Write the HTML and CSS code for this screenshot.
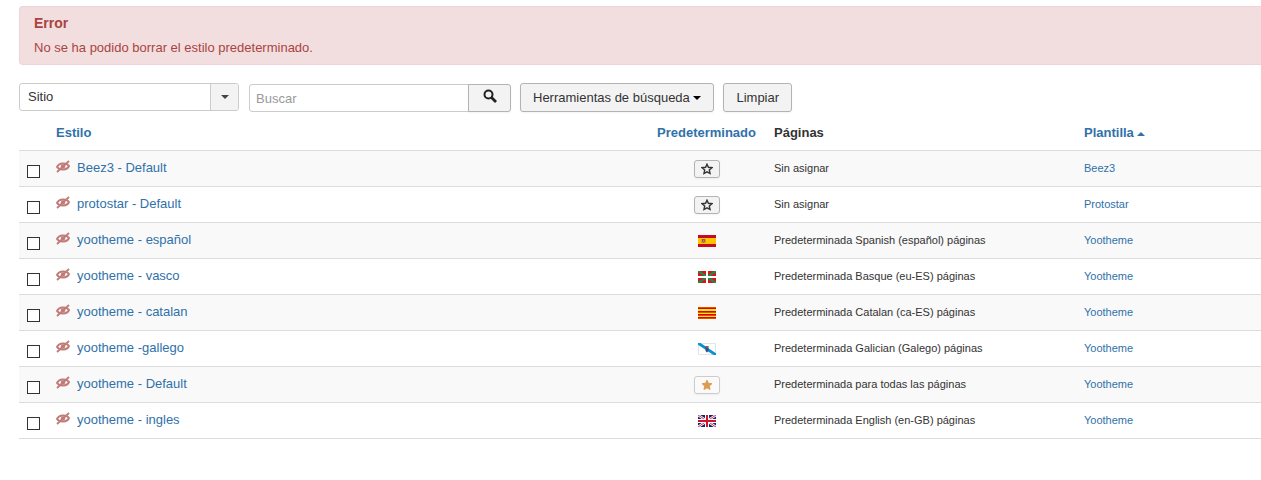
FILE: index.html
```html
<!DOCTYPE html>
<html lang="es">

<head>
    <meta charset="UTF-8">
    <title>Plantillas: Estilos</title>
    <link rel="stylesheet" href="styles.css">
</head>

<body>
    <svg class="sprite" aria-hidden="true">
        <symbol id="eye" viewBox="0 0 14 13">
            <path d="M1 7C3 2.500 10.500 2.500 13 6C11 10.500 3.500 10.500 1 7Z" fill="none" stroke="currentColor" stroke-width="2" />
            <circle cx="7" cy="6.500" r="2.200" fill="currentColor" />
            <path d="M1 12L13 1" stroke="currentColor" stroke-width="1.800" />
        </symbol>
        <symbol id="star" viewBox="0 0 12 12">
            <path d="M6 1.200L7.400 4.300L10.900 4.700L8.300 7L9 10.500L6 8.800L3 10.500L3.700 7L1.100 4.700L4.600 4.300Z" />
        </symbol>
    </svg>

    <div class="container">
        <div class="alert">
            <h4>Error</h4>
            <p>No se ha podido borrar el estilo predeterminado.</p>
        </div>

        <form class="filters" onsubmit="return false">
            <div class="select">
                <select aria-label="Cliente">
                    <option>Sitio</option>
                    <option>Administrador</option>
                </select>
                <span class="arrow"><i class="caret"></i></span>
            </div>
            <div class="search">
                <input type="text" placeholder="Buscar" aria-label="Buscar">
                <button class="btn btn-search" aria-label="Buscar">
                    <svg width="14" height="14" viewBox="0 0 14 14">
                        <circle cx="5.500" cy="5.500" r="4" fill="none" stroke="#222" stroke-width="2" />
                        <path d="M8.500 8.500L13 13" stroke="#222" stroke-width="2.800" />
                    </svg>
                </button>
            </div>
            <button type="button" class="btn">Herramientas de búsqueda <i class="caret dark"></i></button>
            <button type="button" class="btn">Limpiar</button>
        </form>

        <table class="styles">
            <thead>
                <tr>
                    <th class="check"></th>
                    <th><a href="#">Estilo</a></th>
                    <th class="default"><a href="#">Predeterminado</a></th>
                    <th class="pages">Páginas</th>
                    <th class="template"><a href="#">Plantilla <i class="caret up"></i></a></th>
                </tr>
            </thead>
            <tbody>
                <tr>
                    <td><input type="checkbox" aria-label="Beez3 - Default"></td>
                    <td><svg class="eye"><use href="#eye" /></svg><a href="#">Beez3 - Default</a></td>
                    <td class="default"><button class="btn btn-micro" aria-label="Predeterminar"><svg class="star"><use href="#star" /></svg></button></td>
                    <td class="small">Sin asignar</td>
                    <td class="small"><a href="#">Beez3</a></td>
                </tr>
                <tr>
                    <td><input type="checkbox" aria-label="protostar - Default"></td>
                    <td><svg class="eye"><use href="#eye" /></svg><a href="#">protostar - Default</a></td>
                    <td class="default"><button class="btn btn-micro" aria-label="Predeterminar"><svg class="star"><use href="#star" /></svg></button></td>
                    <td class="small">Sin asignar</td>
                    <td class="small"><a href="#">Protostar</a></td>
                </tr>
                <tr>
                    <td><input type="checkbox" aria-label="yootheme - español"></td>
                    <td><svg class="eye"><use href="#eye" /></svg><a href="#">yootheme - español</a></td>
                    <td class="default">
                        <svg class="flag" viewBox="0 0 18 12">
                            <path d="M0 0H18V12H0Z" fill="#c60b1e" />
                            <path d="M0 3H18V9H0Z" fill="#ffc400" />
                            <path d="M3 4H4V8H3ZM7 4H8V8H7Z" fill="#d99a4a" />
                            <path d="M4 4H7V7L5.500 8L4 7Z" fill="#b8503c" />
                            <path d="M5 5H6V7H5Z" fill="#a58b8b" />
                        </svg>
                    </td>
                    <td class="small">Predeterminada Spanish (español) páginas</td>
                    <td class="small"><a href="#">Yootheme</a></td>
                </tr>
                <tr>
                    <td><input type="checkbox" aria-label="yootheme - vasco"></td>
                    <td><svg class="eye"><use href="#eye" /></svg><a href="#">yootheme - vasco</a></td>
                    <td class="default">
                        <svg class="flag" viewBox="0 0 18 12">
                            <path d="M0 0H18V12H0Z" fill="#e01020" />
                            <path d="M0 0L18 12M18 0L0 12" stroke="#129247" stroke-width="2.200" />
                            <path d="M9 0V12M0 6H18" stroke="#fff" stroke-width="2" />
                        </svg>
                    </td>
                    <td class="small">Predeterminada Basque (eu-ES) páginas</td>
                    <td class="small"><a href="#">Yootheme</a></td>
                </tr>
                <tr>
                    <td><input type="checkbox" aria-label="yootheme - catalan"></td>
                    <td><svg class="eye"><use href="#eye" /></svg><a href="#">yootheme - catalan</a></td>
                    <td class="default">
                        <svg class="flag" viewBox="0 0 18 12">
                            <path d="M0 0H18V12H0Z" fill="#fcf000" />
                            <path d="M0 1.500H18M0 4.500H18M0 7.500H18M0 10.500H18" stroke="#d80012" />
                            <path d="M0 .500H18M0 5.500H18M0 8.500H18M0 11.500H18" stroke="#e84a00" />
                        </svg>
                    </td>
                    <td class="small">Predeterminada Catalan (ca-ES) páginas</td>
                    <td class="small"><a href="#">Yootheme</a></td>
                </tr>
                <tr>
                    <td><input type="checkbox" aria-label="yootheme -gallego"></td>
                    <td><svg class="eye"><use href="#eye" /></svg><a href="#">yootheme -gallego</a></td>
                    <td class="default">
                        <svg class="flag" viewBox="0 0 18 12">
                            <path d="M.500 .500H17.500V11.500H.500Z" fill="#fff" stroke="#e4e4e4" />
                            <path d="M0 0L18 12" stroke="#0a91d0" stroke-width="2.800" />
                            <path d="M7.500 3H10.500V8L9 9.500L7.500 8Z" fill="#34508c" />
                            <path d="M8 3H10V5H8Z" fill="#a8503c" />
                        </svg>
                    </td>
                    <td class="small">Predeterminada Galician (Galego) páginas</td>
                    <td class="small"><a href="#">Yootheme</a></td>
                </tr>
                <tr>
                    <td><input type="checkbox" aria-label="yootheme - Default"></td>
                    <td><svg class="eye"><use href="#eye" /></svg><a href="#">yootheme - Default</a></td>
                    <td class="default"><button class="btn btn-micro active" aria-label="Predeterminado"><svg class="star"><use href="#star" /></svg></button></td>
                    <td class="small">Predeterminada para todas las páginas</td>
                    <td class="small"><a href="#">Yootheme</a></td>
                </tr>
                <tr>
                    <td><input type="checkbox" aria-label="yootheme - ingles"></td>
                    <td><svg class="eye"><use href="#eye" /></svg><a href="#">yootheme - ingles</a></td>
                    <td class="default">
                        <svg class="flag" viewBox="0 0 18 12">
                            <path d="M0 0H18V12H0Z" fill="#10247a" />
                            <path d="M0 0L18 12M18 0L0 12" stroke="#fff" stroke-width="2.400" />
                            <path d="M0 0L18 12M18 0L0 12" stroke="#d8344a" stroke-width="1" />
                            <path d="M9 0V12M0 6H18" stroke="#fff" stroke-width="4" />
                            <path d="M9 0V12M0 6H18" stroke="#d0142c" stroke-width="2" />
                        </svg>
                    </td>
                    <td class="small">Predeterminada English (en-GB) páginas</td>
                    <td class="small"><a href="#">Yootheme</a></td>
                </tr>
            </tbody>
        </table>
    </div>
</body>

</html>
```
FILE: styles.css
```css
* {
    box-sizing: border-box;
    margin: 0;
    padding: 0;
}

body {
    background-color: #fff;
    color: #333;
    font-family: "Liberation Sans", Arial, sans-serif;
    font-size: 13px;
    line-height: 18px;
}

a {
    color: #3071a9;
    text-decoration: none;
}

.sprite {
    display: none;
}

.container {
    padding: 6px 0 0 19px;
}

/* error message */
.alert {
    padding: 7px 14px;
    border: 1px solid #eed3d7;
    border-right: 0;
    border-radius: 4px 0 0 4px;
    background-color: #f2dede;
    color: #a94442;
}

.alert h4 {
    margin-bottom: 7px;
    font-size: 14px;
}

/* filter bar */
.filters {
    display: flex;
    align-items: flex-end;
    gap: 9px;
    margin-top: 18px;
}

.select {
    position: relative;
    align-self: flex-start;
    width: 220px;
}

.select select {
    appearance: none;
    display: block;
    width: 100%;
    height: 28px;
    padding: 0 36px 0 8px;
    border: 1px solid #ccc;
    border-radius: 3px;
    background-color: #fff;
    color: #333;
    font: inherit;
}

.select .arrow {
    position: absolute;
    top: 1px;
    right: 1px;
    bottom: 1px;
    display: flex;
    align-items: center;
    justify-content: center;
    width: 28px;
    border-left: 1px solid #ccc;
    border-radius: 0 2px 2px 0;
    background-color: #f3f3f3;
    pointer-events: none;
}

.search {
    display: flex;
    align-items: flex-end;
    margin-left: 1px;
}

.search input {
    width: 220px;
    height: 28px;
    padding: 0 6px;
    border: 1px solid #ccc;
    border-radius: 3px 0 0 3px;
    color: #333;
    font: inherit;
}

.search input::placeholder {
    color: #999;
}

.btn {
    height: 29px;
    padding: 0 12px;
    border: 1px solid #b3b3b3;
    border-radius: 3px;
    background-color: #f3f3f3;
    box-shadow: 0 1px 2px rgba(0, 0, 0, .05);
    color: #333;
    font: inherit;
    white-space: nowrap;
}

.btn-search {
    width: 43px;
    height: 28px;
    margin-left: -1px;
    border-radius: 0 3px 3px 0;
}

.caret {
    display: inline-block;
    border-top: 4px solid #444;
    border-right: 4px solid transparent;
    border-left: 4px solid transparent;
    vertical-align: middle;
}

.caret.dark {
    border-top-color: #000;
}

.caret.up {
    border-top: 0;
    border-bottom: 4px solid #3071a9;
}

/* list of styles */
.styles {
    width: 100%;
    margin-top: 2px;
    border-collapse: collapse;
    table-layout: fixed;
}

.styles th,
.styles td {
    height: 36px;
    padding: 0 8px;
    border-bottom: 1px solid #ddd;
    text-align: left;
    vertical-align: middle;
}

.styles th {
    padding-top: 3px;
}

.styles tbody tr:nth-child(odd) {
    background-color: #f9f9f9;
}

.styles .check {
    width: 29px;
}

.styles .default {
    width: 119px;
    padding-right: 0;
    padding-left: 0;
    text-align: center;
}

.styles .pages {
    width: 310px;
}

.styles .template {
    width: 185px;
}

.styles .small {
    font-size: 11px;
}

.styles input {
    appearance: none;
    display: block;
    width: 13px;
    height: 13px;
    margin-top: 6px;
    border: 1px solid #333;
    background-color: #fff;
}

.styles input:checked {
    background-color: #3071a9;
}

.eye {
    width: 14px;
    height: 13px;
    margin-right: 7px;
    color: #c07c78;
    vertical-align: -1px;
}

.flag {
    display: block;
    width: 18px;
    height: 12px;
    margin: 2px auto 0;
}

.btn-micro {
    display: block;
    width: 26px;
    height: 18px;
    margin: 1px auto 0;
    padding: 0;
}

.star {
    display: block;
    width: 12px;
    height: 12px;
    margin: 0 auto;
    fill: none;
    stroke: #333;
    stroke-width: 1.4;
}

.btn-micro.active {
    border-color: #ccc;
    background-color: #fafafa;
}

.active .star {
    fill: #dc9c50;
    stroke: #dc9c50;
    stroke-width: 1;
}
```
